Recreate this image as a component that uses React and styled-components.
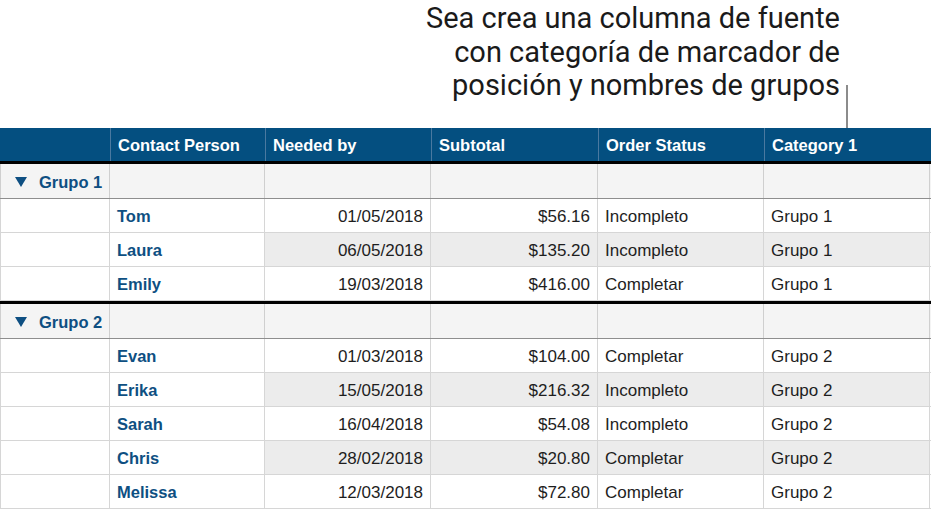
import React from 'react';
import styled, { createGlobalStyle } from 'styled-components';

const GlobalStyle = createGlobalStyle`
  html, body {
    margin: 0;
    padding: 0;
    background: #ffffff;
  }
  body {
    width: 931px;
    height: 511px;
    overflow: hidden;
  }
`;

const COLS = '110px 155px 166px 167px 166px 166px';

const groups = [
  {
    name: 'Grupo 1',
    rows: [
      ['Tom', '01/05/2018', '$56.16', 'Incompleto'],
      ['Laura', '06/05/2018', '$135.20', 'Incompleto'],
      ['Emily', '19/03/2018', '$416.00', 'Completar'],
    ],
  },
  {
    name: 'Grupo 2',
    rows: [
      ['Evan', '01/03/2018', '$104.00', 'Completar'],
      ['Erika', '15/05/2018', '$216.32', 'Incompleto'],
      ['Sarah', '16/04/2018', '$54.08', 'Incompleto'],
      ['Chris', '28/02/2018', '$20.80', 'Completar'],
      ['Melissa', '12/03/2018', '$72.80', 'Completar'],
    ],
  },
];

const App = () => {
  return (
    <>
      <GlobalStyle />
      <Page>
        <CaptionArea>
          <Caption>
            <span>Sea crea una columna de fuente</span>
            <span>con categoría de marcador de</span>
            <span>posición y nombres de grupos</span>
          </Caption>
          <Leader />
        </CaptionArea>
        <Table>
          <HeaderRow>
            <HeadCell />
            <HeadCell>Contact Person</HeadCell>
            <HeadCell>Needed by</HeadCell>
            <HeadCell>Subtotal</HeadCell>
            <HeadCell>Order Status</HeadCell>
            <HeadCell>Category 1</HeadCell>
          </HeaderRow>
          {groups.map((g, gi) => (
            <Group key={g.name} $first={gi === 0}>
              <GroupRow>
                <GroupCell>
                  <Arrow />
                  {g.name}
                </GroupCell>
                <GroupCell />
                <GroupCell />
                <GroupCell />
                <GroupCell />
                <GroupCell />
              </GroupRow>
              {g.rows.map((r, i) => {
                const shaded = i % 2 === 1;
                return (
                  <DataRow key={r[0]}>
                    <Cell />
                    <Cell $name>{r[0]}</Cell>
                    <Cell $right $shaded={shaded}>
                      {r[1]}
                    </Cell>
                    <Cell $right $shaded={shaded}>
                      {r[2]}
                    </Cell>
                    <Cell $shaded={shaded}>{r[3]}</Cell>
                    <Cell $shaded={shaded}>{g.name}</Cell>
                  </DataRow>
                );
              })}
            </Group>
          ))}
        </Table>
      </Page>
    </>
  );
};
export default App;

const Page = styled.div`
  width: 931px;
  display: flex;
  flex-direction: column;
`;

const CaptionArea = styled.div`
  height: 128px;
  display: flex;
  justify-content: flex-end;
  align-items: flex-end;
  padding-right: 83px;
  box-sizing: border-box;
`;

const Caption = styled.div`
  display: flex;
  flex-direction: column;
  align-items: flex-end;
  align-self: flex-start;
  padding-top: 2px;
  font-family: Roboto, 'Noto Sans', sans-serif;
  font-size: 29px;
  line-height: 33.5px;
  color: #1a1a1a;
`;

const Leader = styled.div`
  width: 2px;
  height: 43px;
  margin-left: 6px;
  background: #8c8c8c;
`;

const Table = styled.div`
  display: flex;
  flex-direction: column;
  font-family: 'Liberation Sans', Arial, sans-serif;
  font-size: 17px;
`;

const HeaderRow = styled.div`
  display: grid;
  grid-template-columns: ${COLS};
  height: 33px;
  background: #044f80;
  border-bottom: 3px solid #000000;
`;

const HeadCell = styled.div`
  display: flex;
  align-items: center;
  padding: 2px 7px 0;
  color: #ffffff;
  font-weight: bold;
  font-size: 16.5px;
  border-left: 1px solid #4a79a0;
  &:first-child {
    border-left: none;
  }
`;

const Group = styled.div`
  display: flex;
  flex-direction: column;
  border-top: ${(p) => (p.$first ? 'none' : '3px solid #000000')};
`;

const GroupRow = styled.div`
  display: grid;
  grid-template-columns: ${COLS};
  height: 35px;
  background: #f4f4f4;
  border-bottom: 1px solid #8e8e8e;
  box-sizing: border-box;
`;

const GroupCell = styled.div`
  display: flex;
  align-items: center;
  padding: 2px 0 0 14px;
  color: #0e4f82;
  font-weight: bold;
  font-size: 16.5px;
  white-space: nowrap;
  border-right: 1px solid #cfcfcf;
  &:first-child {
    border-left: 1px solid #cfcfcf;
  }
`;

const Arrow = styled.span`
  flex-shrink: 0;
  width: 0;
  height: 0;
  margin: 0 12px 1px 0;
  border-left: 6px solid transparent;
  border-right: 6px solid transparent;
  border-top: 10px solid #0e4f82;
`;

const DataRow = styled.div`
  display: grid;
  grid-template-columns: ${COLS};
  height: 34px;
  border-bottom: 1px solid #d6d6d6;
  box-sizing: border-box;
`;

const Cell = styled.div`
  display: flex;
  align-items: center;
  justify-content: ${(p) => (p.$right ? 'flex-end' : 'flex-start')};
  padding: 2px 7px 0;
  color: ${(p) => (p.$name ? '#0e4f82' : '#1e1e1e')};
  font-weight: ${(p) => (p.$name ? 'bold' : 'normal')};
  font-size: ${(p) => (p.$name ? '16.5px' : '17px')};
  background: ${(p) => (p.$shaded ? '#ececec' : '#ffffff')};
  border-right: 1px solid #d6d6d6;
  &:first-child {
    border-left: 1px solid #d6d6d6;
  }
`;
